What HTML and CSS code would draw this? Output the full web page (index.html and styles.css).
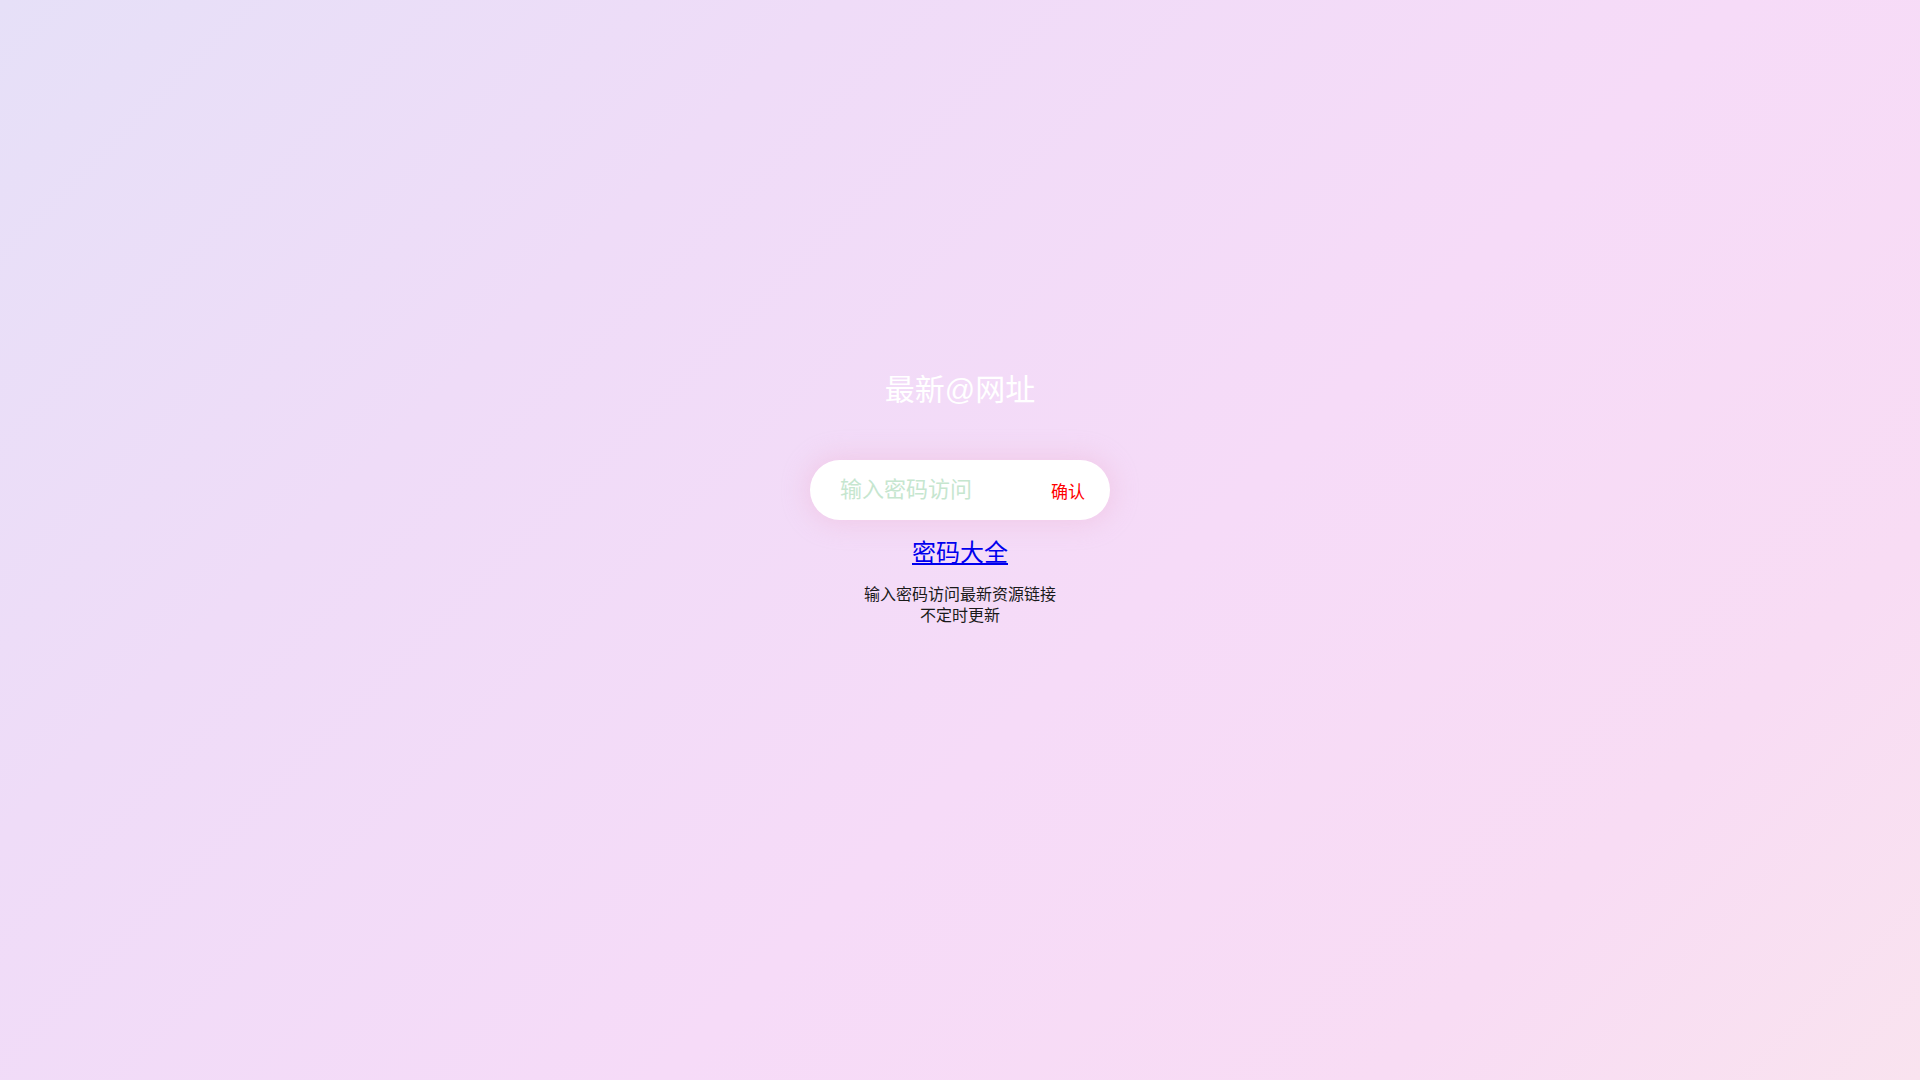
FILE: index.html
```html
<!DOCTYPE html>
<html lang="zh">
<head>
<meta charset="utf-8">
<title>最新@网址</title>
<link rel="stylesheet" href="styles.css">
</head>
<body>
<main class="page">
  <h1 class="title">最新@网址</h1>
  <form class="pw-form" onsubmit="return false">
    <input class="pw-input" type="password" placeholder="输入密码访问">
    <button class="pw-btn" type="submit">确认</button>
  </form>
  <a class="pw-link" href="#">密码大全</a>
  <p class="note">输入密码访问最新资源链接<br>不定时更新</p>
</main>
</body>
</html>
```
FILE: styles.css
```css
html, body {
  margin: 0;
  padding: 0;
  height: 100%;
}
body {
  font-family: "Liberation Sans", "Noto Sans CJK SC", sans-serif;
  background: linear-gradient(135deg, #e6e0f8 0%, #efdcf8 28%, #f6dbf8 58%, #f8dcf4 82%, #f9e3ef 100%);
  min-height: 1080px;
}
.page {
  display: flex;
  flex-direction: column;
  align-items: center;
  padding-top: 372px;
}
.title {
  margin: 0;
  font-size: 30px;
  line-height: 36px;
  font-weight: normal;
  color: #ffffff;
}
.pw-form {
  margin-top: 52px;
  width: 300px;
  height: 60px;
  box-sizing: border-box;
  background: #ffffff;
  border-radius: 30px;
  box-shadow: 0 0 24px 4px rgba(240, 195, 225, 0.7);
  display: flex;
  align-items: center;
  padding: 0 25px 0 30px;
}
.pw-input {
  flex: 1;
  min-width: 0;
  border: none;
  outline: none;
  background: transparent;
  font-family: inherit;
  font-size: 22px;
  color: #333;
  padding: 0;
}
.pw-input::placeholder {
  color: #c6e6cf;
}
.pw-btn {
  border: none;
  background: transparent;
  padding: 0;
  font-family: inherit;
  font-size: 17px;
  color: #ff0000;
  cursor: pointer;
}
.pw-link {
  margin-top: 19px;
  font-size: 24px;
  line-height: 28px;
  color: #0000ee;
  text-decoration: underline;
}
.note {
  margin: 17px 0 0;
  font-size: 16px;
  line-height: 21px;
  text-align: center;
  color: #1a1a1a;
}
```
